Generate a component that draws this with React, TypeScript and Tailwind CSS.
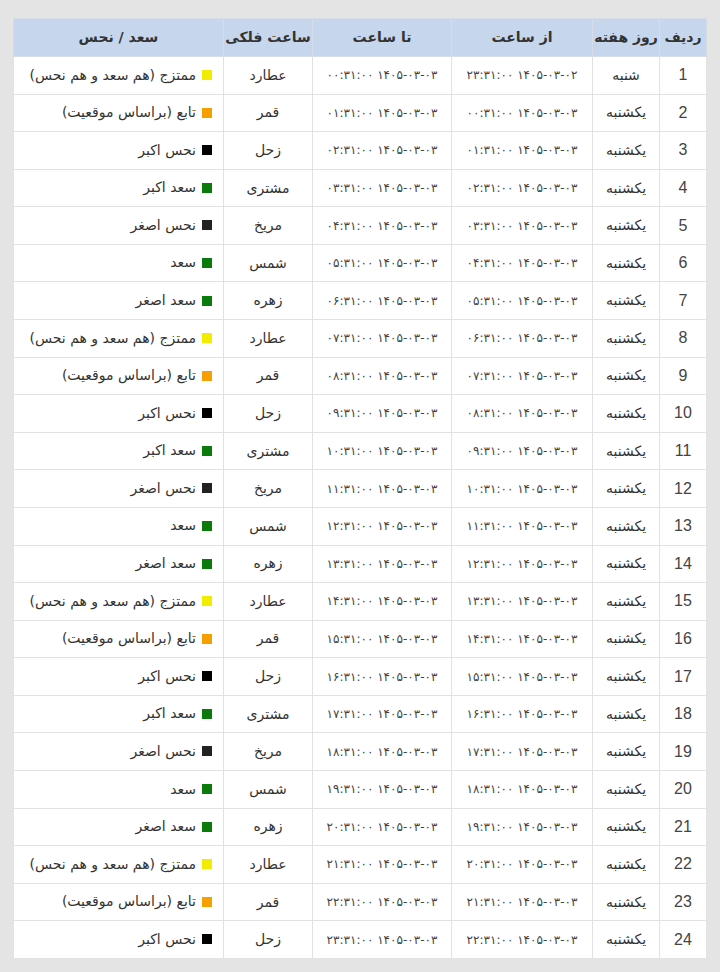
import React from 'react';

const fa = (s: string) => s.replace(/\d/g, (d) => '۰۱۲۳۴۵۶۷۸۹'[Number(d)]);
const pad = (n: number) => String(n).padStart(2, '0');

// planetary hour cycle
const planets = [
  { name: 'عطارد', label: 'ممتزج (هم سعد و هم نحس)', color: 'bg-[#f2ec00]' },
  { name: 'قمر', label: 'تابع (براساس موقعیت)', color: 'bg-[#f5a000]' },
  { name: 'زحل', label: 'نحس اکبر', color: 'bg-[#000000]' },
  { name: 'مشتری', label: 'سعد اکبر', color: 'bg-[#0a7a0a]' },
  { name: 'مریخ', label: 'نحس اصغر', color: 'bg-[#222222]' },
  { name: 'شمس', label: 'سعد', color: 'bg-[#0a7a0a]' },
  { name: 'زهره', label: 'سعد اصغر', color: 'bg-[#0a7a0a]' },
];

const rows = Array.from({ length: 24 }, (_, i) => {
  const day = i === 0 ? 'شنبه' : 'یکشنبه';
  const fromDate = i === 0 ? '1405-03-02' : '1405-03-03';
  const fromHour = i === 0 ? 23 : i - 1;
  const from = fa(`${fromDate} ${pad(fromHour)}:31:00`);
  const to = fa(`1405-03-03 ${pad(i)}:31:00`);
  return { id: i + 1, day, from, to, planet: planets[i % 7] };
});

const th = 'border border-[#d6dde8] font-semibold text-[14px] text-[#333] h-[38px] text-center';
const td = 'border border-[#e2e2e2] text-[#333] text-center';
const tx = ' text-[14px]';
const dt = ' text-[12px] text-[#444]';

export default function App() {
  return (
    <div className="min-h-[972px] w-[720px] bg-[#e4e4e4] pt-[18px] pl-[13px]">
      <table
        dir="rtl"
        className="w-[693px] table-fixed border-collapse bg-white"
        style={{ fontFamily: '"DejaVu Sans", sans-serif' }}
      >
        <colgroup>
          <col className="w-[47px]" />
          <col className="w-[67px]" />
          <col className="w-[141px]" />
          <col className="w-[139px]" />
          <col className="w-[89px]" />
          <col className="w-[210px]" />
        </colgroup>
        <thead>
          <tr className="bg-[#c6d6ec]">
            <th className={th}>ردیف</th>
            <th className={th}>روز هفته</th>
            <th className={th}>از ساعت</th>
            <th className={th}>تا ساعت</th>
            <th className={th}>ساعت فلکی</th>
            <th className={th}>سعد / نحس</th>
          </tr>
        </thead>
        <tbody>
          {rows.map((r) => (
            <tr key={r.id} className="h-[37.58px]">
              <td className={td + ' text-[16px] text-[#444]'} style={{ fontFamily: '"Liberation Sans", sans-serif' }}>
                {r.id}
              </td>
              <td className={td + tx}>{r.day}</td>
              <td className={td + dt}>{r.from}</td>
              <td className={td + dt}>{r.to}</td>
              <td className={td + tx}>{r.planet.name}</td>
              <td className={td + tx + ' text-right pr-[11px]'}>
                <span className="inline-flex items-center gap-[6px]">
                  <span className={'inline-block w-[10px] h-[10px] ' + r.planet.color} />
                  <span>{r.planet.label}</span>
                </span>
              </td>
            </tr>
          ))}
        </tbody>
      </table>
    </div>
  );
}
